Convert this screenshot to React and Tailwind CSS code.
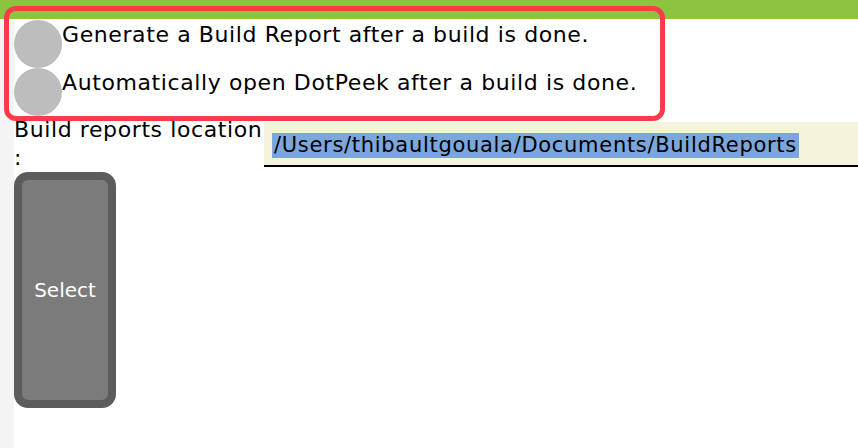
import React from "react";

function Check({ label }) {
  return (
    <div className="flex items-start h-[48px]">
      <div className="w-[48px] h-[48px] rounded-full bg-[#bdbdbd] shrink-0" />
      <span className="pt-[2px] text-[22px] leading-[26px] tracking-[0.6px] text-black whitespace-nowrap">
        {label}
      </span>
    </div>
  );
}

export default function App() {
  return (
    <div
      className="relative w-[858px] h-[448px] bg-white overflow-hidden flex flex-col"
      style={{ fontFamily: '"DejaVu Sans", "Liberation Sans", sans-serif' }}
    >
      <div className="h-[19px] bg-[#8cc43f] shrink-0" />
      <div className="flex flex-1">
        <div className="w-[14px] bg-[#f4f4f4] shrink-0" />
        <div className="flex-1 flex flex-col pt-[1px]">
          <Check label="Generate a Build Report after a build is done." />
          <Check label="Automatically open DotPeek after a build is done." />
          <div className="flex">
            <div className="w-[250px] text-[22px] leading-[28px] tracking-[0.6px] text-black">
              Build reports location :
            </div>
            <div className="flex-1 mt-[6px] h-[45px] bg-[#f4f4dc] border-b-2 border-black pl-[8px] pt-[11px] flex items-start">
              <span className="bg-[#7ba7dc] text-[21px] leading-[25px] tracking-[0.7px] text-black px-[2px]">
                /Users/thibaultgouala/Documents/BuildReports
              </span>
            </div>
          </div>
          <button className="w-[102px] h-[236px] rounded-[14px] border-[8px] border-[#5c5c5c] bg-[#7b7b7b] text-white text-[20px] flex items-center justify-center">
            Select
          </button>
        </div>
      </div>
      <div className="absolute left-[4px] top-[6px] w-[661px] h-[115px] border-[5px] border-[#fc3b4a] rounded-[12px] pointer-events-none" />
    </div>
  );
}
